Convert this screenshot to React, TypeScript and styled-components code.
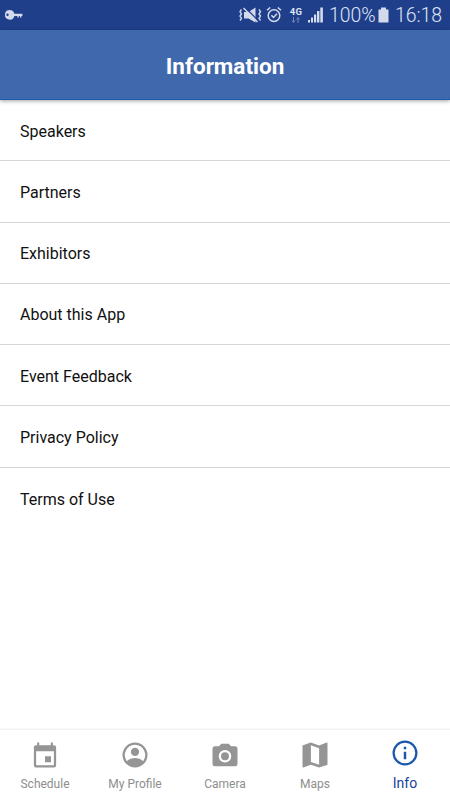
import React from "react";
import styled, { createGlobalStyle } from "styled-components";

const GlobalStyle = createGlobalStyle`
  * { box-sizing: border-box; }
  body { margin: 0; background: #fff; }
`;

const Screen = styled.div`
  width: 450px;
  height: 800px;
  display: flex;
  flex-direction: column;
  overflow: hidden;
  background: #fff;
  color: #111;
  font-family: Roboto, "Liberation Sans", sans-serif;
`;

const StatusBar = styled.div`
  height: 30px;
  flex: none;
  display: flex;
  align-items: center;
  justify-content: space-between;
  padding: 0 8px 0 5px;
  background: #203f8b;
  color: #dfe5f3;
`;

const StatusGroup = styled.div`
  display: flex;
  align-items: center;
`;

const Glyph = styled.svg<{ $gap?: number }>`
  display: block;
  flex: none;
  fill: #d3daeb;
  margin-right: ${(p) => p.$gap ?? 0}px;
`;

const Network = styled.div`
  display: flex;
  flex-direction: column;
  align-items: center;
  width: 14px;
  margin-right: 4px;
  font-size: 9.5px;
  line-height: 10px;
  font-weight: 700;
  letter-spacing: 0.4px;
`;

const StatusText = styled.span<{ $width: number }>`
  width: ${(p) => p.$width}px;
  font-size: 19.4px;
  line-height: 30px;
  white-space: nowrap;
  font-weight: 300;
  padding-top: 1px;
`;

const Header = styled.header`
  height: 70px;
  flex: none;
  z-index: 1;
  display: flex;
  align-items: center;
  justify-content: center;
  padding-top: 3px;
  background: #4069ad;
  border-bottom: 1px solid #1c5bab;
  box-shadow: 0 1px 4px rgba(0, 0, 0, 0.38);
`;

const Title = styled.h1`
  margin: 0;
  color: #fff;
  font-size: 22.5px;
  line-height: 28px;
  font-weight: 700;
`;

const List = styled.main`
  flex: 1;
`;

const Row = styled.div`
  height: 61.25px;
  padding: 2px 20px 0;
  display: flex;
  align-items: center;
  font-size: 16px;
  border-bottom: 1px solid #d6d6d6;
  &:last-child { border-bottom: 0; }
`;

const TabBar = styled.nav`
  height: 71px;
  flex: none;
  display: grid;
  grid-template-columns: repeat(5, 1fr);
  border-top: 1px solid #f2f2f2;
  box-shadow: 0 -1px 1px rgba(0, 0, 0, 0.025);
`;

const Tab = styled.div<{ $active?: boolean }>`
  display: flex;
  flex-direction: column;
  align-items: center;
  padding-top: ${(p) => (p.$active ? 7.5 : 10)}px;
  color: ${(p) => (p.$active ? "#173fa0" : "#8e8e8e")};
  font-size: ${(p) => (p.$active ? 14 : 12)}px;
`;

const TabIcon = styled.svg<{ $active?: boolean }>`
  width: 30px;
  height: 30px;
  fill: ${(p) => (p.$active ? "#1c57ab" : "#959595")};
`;

const TabLabel = styled.span<{ $active?: boolean }>`
  margin-top: ${(p) => (p.$active ? 7 : 6)}px;
  line-height: 16px;
`;

const rows = [
  "Speakers",
  "Partners",
  "Exhibitors",
  "About this App",
  "Event Feedback",
  "Privacy Policy",
  "Terms of Use",
];

const tabs = [
  {
    label: "Schedule",
    path: "M5.7 2H7.4V4.1H16.6V2H18.3V4.1H19.2Q20.9 4.1 20.9 5.8V20.3Q20.9 22 19.2 22H4.8Q3.1 22 3.1 20.3V5.8Q3.1 4.1 4.8 4.1H5.7ZM4.9 8.9V20.2H19.1V8.9ZM12 13H16.8V17.8H12Z",
  },
  {
    label: "My Profile",
    path: "M12 2a10 10 0 1 0 0 20 10 10 0 0 0 0-20ZM12 3.7a8.3 8.3 0 0 1 6.5 13.2C16.93 15.09 14 14.4 12 14.4s-4.93.69-6.5 2.5A8.3 8.3 0 0 1 12 3.7ZM12 6.2a3.3 3.3 0 1 0 0 6.6 3.3 3.3 0 0 0 0-6.6Z",
  },
  {
    label: "Camera",
    path: "M9 3 7.17 5H4a2 2 0 0 0-2 2v12a2 2 0 0 0 2 2h16a2 2 0 0 0 2-2V7a2 2 0 0 0-2-2h-3.17L15 3ZM12 8a5 5 0 1 1 0 10 5 5 0 0 1 0-10ZM12 9.8a3.2 3.2 0 1 0 0 6.4 3.2 3.2 0 0 0 0-6.4Z",
  },
  {
    label: "Maps",
    path: "M21.4 2 15.3 4.3 8.7 2 2.4 4.1Q2 4.2 2 4.7V21.4Q2 22.1 2.6 22L8.7 19.7 15.3 22 21.6 19.9Q22 19.8 22 19.3V2.6Q22 1.9 21.4 2ZM15.3 19.8 8.7 17.5V4.2L15.3 6.5Z",
  },
  {
    label: "Info",
    active: true,
    path: "M11 17h2v-6h-2v6ZM11 9h2V7h-2v2ZM12 2a10 10 0 1 0 0 20 10 10 0 0 0 0-20ZM12 20.2a8.2 8.2 0 1 1 0-16.4 8.2 8.2 0 0 1 0 16.4Z",
  },
];

function StatusIcons() {
  return (
    <>
      <Glyph $gap={4} width="24" height="18" viewBox="0 0 24 18">
        <path d="M6 6h4.5L17.5 1.5v15L10.5 12.5H6Z" />
        <path d="M6.5 .8 20.5 14.8" stroke="#203f8b" strokeWidth="1.3" />
        <path
          d="M5.5 2 19.5 16M3.5 3.5 2 5.7l1.5 2.2L2 10.1l1.5 2.2L2 14.5M21 3.5l1.5 2.2L21 7.9l1.5 2.2-1.5 2.2 1.5 2.2"
          fill="none"
          stroke="#d3daeb"
          strokeWidth="1.4"
        />
      </Glyph>
      <Glyph $gap={7} width="16" height="18" viewBox="0 0 16 18">
        <g fill="none" stroke="#d3daeb" strokeWidth="1.5">
          <circle cx="8" cy="9.6" r="5.8" />
          <path d="m1 4.3 3.2-2.8M15 4.3l-3.2-2.8M5.4 9.2l2.1 2.2 3.5-3.7" />
        </g>
      </Glyph>
      <Network>
        <span>4G</span>
        <Glyph width="10" height="6" viewBox="0 0 10 6">
          <path
            d="M2.5 0v5M1 3.5l1.5 2L4 3.5M7 6V1M5.5 2.5 7 .5l1.5 2"
            fill="none"
            stroke="#7387bb"
          />
        </Glyph>
      </Network>
      <Glyph $gap={5} width="17" height="16" viewBox="0 0 17 16">
        <path d="M1 13h2v2.5H1ZM4 10.5h2v5H4ZM7 7.5h2.2v8H7ZM10 4h2.4v11.5H10ZM13.3 .5h2.6v15h-2.6Z" />
      </Glyph>
    </>
  );
}

export default function App() {
  return (
    <Screen>
      <GlobalStyle />
      <StatusBar>
        <Glyph width="18" height="12" viewBox="0 0 18 12">
          <path
            fillRule="evenodd"
            d="M4.8 1a4.8 4.8 0 1 0 4.6 6H12.4V8.4H13.8V7H15V8.4H16.4V7H17.4V4.8H9.4A4.8 4.8 0 0 0 4.8 1ZM2.5 4.6a1.2 1.2 0 1 1 0 2.4 1.2 1.2 0 0 1 0-2.4Z"
          />
        </Glyph>
        <StatusGroup>
          <StatusIcons />
          <StatusText $width={49}>100%</StatusText>
          <Glyph $gap={6} width="11" height="16" viewBox="0 0 11 16">
            <path d="M3 .5h5v2h2.5v13H.5v-13H3Z" />
          </Glyph>
          <StatusText $width={47}>16:18</StatusText>
        </StatusGroup>
      </StatusBar>
      <Header>
        <Title>Information</Title>
      </Header>
      <List>
        {rows.map((row) => (
          <Row key={row}>{row}</Row>
        ))}
      </List>
      <TabBar>
        {tabs.map((tab) => (
          <Tab key={tab.label} $active={tab.active}>
            <TabIcon $active={tab.active} viewBox="0 0 24 24">
              <path fillRule="evenodd" d={tab.path} />
            </TabIcon>
            <TabLabel $active={tab.active}>{tab.label}</TabLabel>
          </Tab>
        ))}
      </TabBar>
    </Screen>
  );
}
